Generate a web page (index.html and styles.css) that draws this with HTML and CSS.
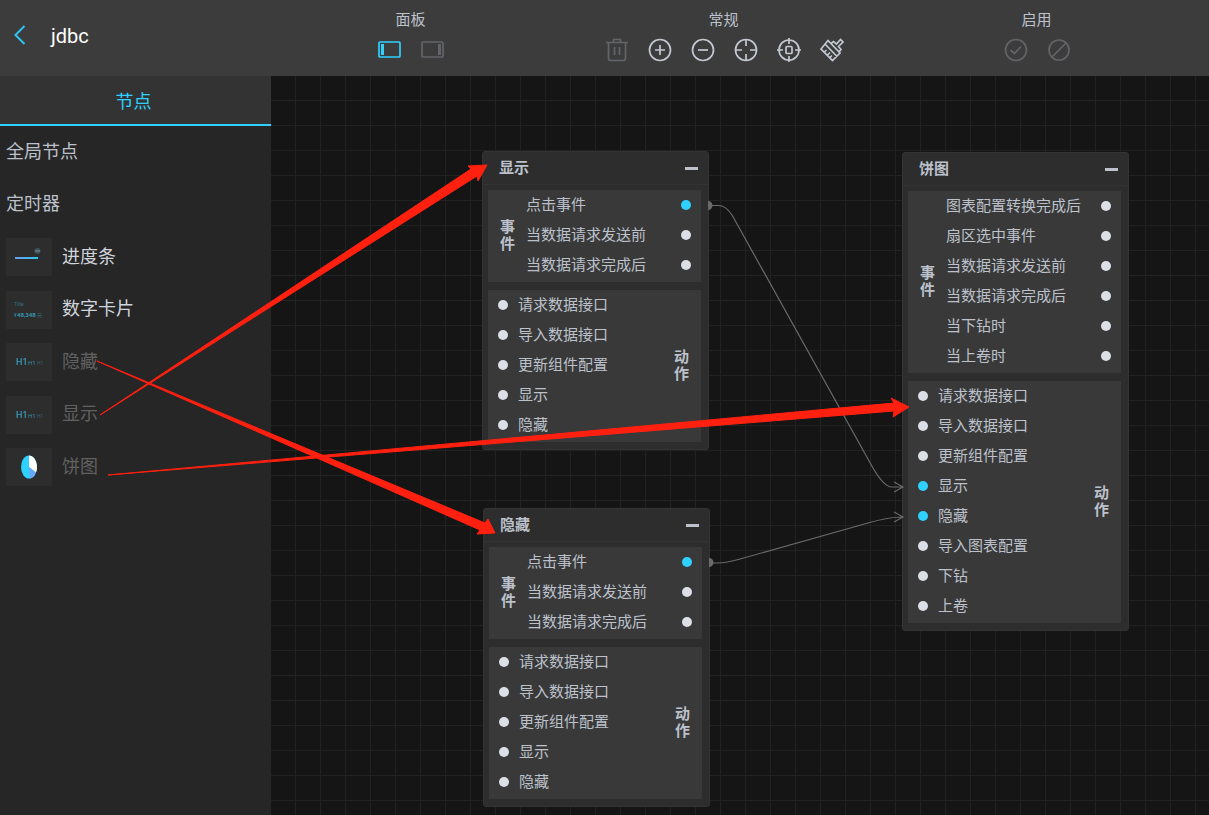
FILE: index.html
```html
<!DOCTYPE html>
<html lang="zh-CN">
<head>
<meta charset="utf-8">
<title>jdbc</title>
<link rel="stylesheet" href="styles.css">
</head>
<body>
<header class="topbar">
  <div class="brand">
    <button class="back" type="button" aria-label="返回"><svg width="12" height="20" viewBox="0 0 12 20"><path d="M10.500 1 1.500 10l9 9"/></svg></button>
    <h1 class="title">jdbc</h1>
  </div>
  <section class="group">
    <h2 class="group-name">面板</h2>
    <div class="tools">
      <button class="tool active" type="button" aria-label="左侧面板"><svg viewBox="0 0 24 24"><rect x="1" y="4" width="21" height="15" rx="1"/><path class="solid" d="M3 6h3v11H3z"/></svg></button>
      <button class="tool off" type="button" aria-label="右侧面板"><svg viewBox="0 0 24 24"><rect x="1" y="4" width="21" height="15" rx="1"/><path class="solid" d="M17 6h3v11h-3z"/></svg></button>
    </div>
  </section>
  <section class="group">
    <h2 class="group-name">常规</h2>
    <div class="tools">
      <button class="tool off" type="button" aria-label="删除"><svg viewBox="0 0 24 24"><path d="M1 4.500h22M8.500 4V1.500h7V4M3.500 4.500V20q0 2.500 2 2.500h13q2 0 2-2.500V4.500M9.500 9v8M14.500 9v8"/></svg></button>
      <button class="tool" type="button" aria-label="放大"><svg viewBox="0 0 24 24"><circle cx="12" cy="12" r="10.500"/><path d="M7 12h10M12 7v10"/></svg></button>
      <button class="tool" type="button" aria-label="缩小"><svg viewBox="0 0 24 24"><circle cx="12" cy="12" r="10.500"/><path d="M7 12h10"/></svg></button>
      <button class="tool" type="button" aria-label="居中"><svg viewBox="0 0 24 24"><circle cx="12" cy="12" r="10.500"/><path d="M12 1v7M12 16v7M1 12h7M16 12h7"/></svg></button>
      <button class="tool" type="button" aria-label="定位"><svg viewBox="0 0 24 24"><circle cx="12" cy="12" r="10"/><rect x="9" y="8.500" width="6" height="7" rx="1"/><path d="M12 0v6M12 18v6M0 12h6M18 12h6"/></svg></button>
      <button class="tool" type="button" aria-label="清理"><svg viewBox="0 0 24 24"><path d="M8 2.500 1 11l11.500 11.500 7.500-7.500zM11 5.500l2.500-2 3 2.500L20.500 1.500l2.500 2.500-4.500 4.500 2.500 3-2 2.500M5.500 6.500 17 18.500M4.500 14l2-2M7.500 17l2.500-2.500M10 19.500l2-2"/></svg></button>
    </div>
  </section>
  <section class="group">
    <h2 class="group-name">启用</h2>
    <div class="tools">
      <button class="tool off" type="button" aria-label="启用"><svg viewBox="0 0 24 24"><circle cx="12" cy="12" r="10.500"/><path d="m6.500 12 4 3.500 6.500-7"/></svg></button>
      <button class="tool off" type="button" aria-label="禁用"><svg viewBox="0 0 24 24"><circle cx="12" cy="12" r="10"/><path d="M5 19 19 5"/></svg></button>
    </div>
  </section>
</header>
<main class="workspace">
  <aside class="sidebar">
    <button class="tab" type="button">节点</button>
    <ul class="list">
      <li class="item">全局节点</li>
      <li class="item">定时器</li>
      <li class="item bright"><span class="thumb"><svg viewBox="0 0 46 38"><defs><linearGradient id="bar"><stop offset="0" stop-color="#6c9cf0"/><stop offset="1" stop-color="#2ec8f4"/></linearGradient></defs><path fill="#25303a" d="M9 19h29v2H9z"/><path fill="url(#bar)" d="M9 19h23v2H9z"/><circle cx="31.500" cy="13" r="3" fill="#3b5058"/><path d="M29 13h5" stroke="#829096"/></svg></span>进度条</li>
      <li class="item bright"><span class="thumb"><svg viewBox="0 0 46 38"><text class="micro dim" x="8" y="15">Title</text><text class="micro" x="8" y="26">¥</text><text class="micro strong" x="11" y="26">48,348</text><text class="micro dim" x="31" y="26">元</text></svg></span>数字卡片</li>
      <li class="item used"><span class="thumb"><svg viewBox="0 0 46 38"><text class="big" x="10" y="22">H1</text><text class="mid" x="22" y="22">H1</text><text class="tiny" x="31" y="22">H1</text></svg></span>隐藏</li>
      <li class="item used"><span class="thumb"><svg viewBox="0 0 46 38"><text class="big" x="10" y="22">H1</text><text class="mid" x="22" y="22">H1</text><text class="tiny" x="31" y="22">H1</text></svg></span>显示</li>
      <li class="item used"><span class="thumb"><svg viewBox="0 0 46 38"><ellipse cx="23" cy="19" rx="8" ry="11.500" fill="#2ed1ff"/><path fill="#fff" d="M23 19V7.500a8 11.500 0 0 1 7 17z"/><path fill="#6aa5ff" d="m23 19 7 5.500a8 11.500 0 0 1-6 6z"/></svg></span>饼图</li>
    </ul>
  </aside>
  <div class="canvas">
    <article class="node node-show">
      <header class="node-head"><h3>显示</h3><button class="fold" type="button" aria-label="收起"></button></header>
      <div class="body">
        <section class="box"><h4 class="side">事件</h4>
          <ul class="ports out"><li class="linked">点击事件</li><li>当数据请求发送前</li><li>当数据请求完成后</li></ul></section>
        <section class="box">
          <ul class="ports in"><li>请求数据接口</li><li>导入数据接口</li><li>更新组件配置</li><li>显示</li><li>隐藏</li></ul><h4 class="side">动作</h4></section>
      </div>
    </article>
    <article class="node node-hide">
      <header class="node-head"><h3>隐藏</h3><button class="fold" type="button" aria-label="收起"></button></header>
      <div class="body">
        <section class="box"><h4 class="side">事件</h4>
          <ul class="ports out"><li class="linked">点击事件</li><li>当数据请求发送前</li><li>当数据请求完成后</li></ul></section>
        <section class="box">
          <ul class="ports in"><li>请求数据接口</li><li>导入数据接口</li><li>更新组件配置</li><li>显示</li><li>隐藏</li></ul><h4 class="side">动作</h4></section>
      </div>
    </article>
    <article class="node node-pie">
      <header class="node-head"><h3>饼图</h3><button class="fold" type="button" aria-label="收起"></button></header>
      <div class="body">
        <section class="box"><h4 class="side">事件</h4>
          <ul class="ports out"><li>图表配置转换完成后</li><li>扇区选中事件</li><li>当数据请求发送前</li><li>当数据请求完成后</li><li>当下钻时</li><li>当上卷时</li></ul></section>
        <section class="box">
          <ul class="ports in"><li>请求数据接口</li><li>导入数据接口</li><li>更新组件配置</li><li class="linked">显示</li><li class="linked">隐藏</li><li>导入图表配置</li><li>下钻</li><li>上卷</li></ul><h4 class="side">动作</h4></section>
      </div>
    </article>
  </div>
  <svg class="overlay" width="1209" height="739" viewBox="0 76 1209 739">
    <g class="wire">
      <path d="M709 205.500h9Q726 205.500 732 215L873 468Q884 487 892 487h10M894 482l9 5-9 5"/>
      <path d="M710 563h8Q726 563 740 559L868 523Q889 517 902 517M894 512l9 5-9 5"/>
      <path class="cap" d="M708 201a4 4 0 0 1 0 9zM709 558a4 4 0 0 1 0 9z"/>
    </g>
    <g class="arrow">
      <path d="M100 415 471 169 468 166 487 165 478 181 477 176z"/>
      <path d="M97 361 485 523 488 519 495 533 477 534 480 530z"/>
      <path d="M108 475 894 403 891 398 909 407 893 417 894 411z"/>
    </g>
  </svg>
</main>
</body>
</html>
```

FILE: styles.css
```css
* { box-sizing: border-box; }
body {
  margin: 0;
  min-height: 100vh;
  display: flex;
  flex-direction: column;
  background: #151515;
  color: #bcc1cb;
  font: 15px/30px "Noto Sans CJK SC", sans-serif;
}
h1, h2, h3, h4, ul { margin: 0; padding: 0; font-size: inherit; list-style: none; }
button { padding: 0; border: 0; background: none; color: inherit; font: inherit; }
svg { display: block; fill: none; }

.topbar {
  display: grid;
  grid-template-columns: 254px repeat(3, 1fr);
  height: 76px;
  padding-right: 16px;
  background: #3c3c3c;
}
.brand { display: flex; align-items: center; gap: 25px; padding: 0 0 6px 14px; }
.back svg { stroke: #2ec5f2; stroke-width: 2; }
.title { color: #fff; font: 400 20px/24px Roboto, sans-serif; padding-top: 2px; }
.group { display: flex; flex-direction: column; align-items: center; padding-top: 8px; }
.group-name { font-weight: 400; line-height: 22px; }
.tools { display: flex; gap: 19px; padding: 8px 0 0 2px; }
.tool { width: 24px; height: 24px; }
.tool svg { width: 24px; height: 24px; stroke: #c3c8d2; stroke-width: 1.7; }
.tool.active svg { stroke: #2ed1ff; }
.tool.off svg { stroke: #626468; }
.tool .solid { stroke: none; fill: #626468; }
.tool.active .solid { fill: #2ed1ff; }

.workspace { flex: 1; display: flex; position: relative; }
.sidebar { flex: 0 0 271px; background: #262626; }
.tab {
  display: block;
  width: 100%;
  height: 50px;
  padding-right: 4px;
  border-bottom: 2px solid #2ed1ff;
  background: #333;
  color: #2ed1ff;
  font-size: 18px;
}
.item { display: flex; gap: 10px; height: 52px; padding-left: 6px; font-size: 18px; line-height: 49px; }
.item:nth-child(even) { height: 53px; }
.item.bright { color: #d0d4dc; }
.item.used { color: #616161; }
.thumb { align-self: center; width: 46px; height: 38px; background: #2d2d2d; }
.thumb text { fill: #39b4d6; font-family: Roboto, sans-serif; }
.thumb .micro { font-size: 5px; opacity: .8; }
.thumb .strong { font-weight: 700; font-size: 6px; }
.thumb .dim { opacity: .5; }
.thumb .big { font-size: 9px; }
.thumb .mid { font-size: 6px; opacity: .7; }
.thumb .tiny { font-size: 5px; opacity: .4; }

.canvas {
  flex: 1;
  position: relative;
  background-color: #151515;
  background-image:
    linear-gradient(to right, transparent 24px, #222 24px),
    linear-gradient(to bottom, transparent 24px, #222 24px);
  background-size: 25px 25px;
}
.node { position: absolute; width: 227px; border: 1px solid #333; border-radius: 3px; background: #2d2d2d; }
.node-show { left: 211px; top: 75px; }
.node-hide { left: 212px; top: 432px; }
.node-pie { left: 631px; top: 76px; }
.node-head {
  display: flex;
  align-items: center;
  justify-content: space-between;
  height: 33px;
  padding: 0 10px 0 16px;
  border-bottom: 1px solid #333;
}
.node-head h3 { padding-bottom: 2px; }
.fold { width: 13px; height: 3px; background: #bcc1cb; }
.body { display: flex; flex-direction: column; gap: 8px; padding: 5px 7px 7px 5px; }
.box { display: flex; align-items: center; padding: 0 10px 2px; background: #393939; }
.side { width: 15px; margin: 0 2px; padding-bottom: 2px; line-height: 17px; font-weight: 700; }
.ports { flex: 1; }
.ports li { display: flex; height: 30px; line-height: 28px; }
.out { margin-left: 9px; }
.out li { justify-content: space-between; }
.in li { gap: 10px; }
.out li::after, .in li::before {
  content: "";
  align-self: center;
  width: 10px;
  height: 10px;
  border-radius: 50%;
  background: #dcdfe6;
}
.ports .linked::after, .ports .linked::before { background: #2ed1ff; }

.overlay { position: absolute; left: 0; top: 0; pointer-events: none; }
.wire { stroke: #6a6a6d; stroke-width: 1.2; }
.wire .cap { fill: #6a6a6d; stroke: none; }
.arrow { fill: #ff2010; stroke: #ff2010; stroke-width: 1; }
```
